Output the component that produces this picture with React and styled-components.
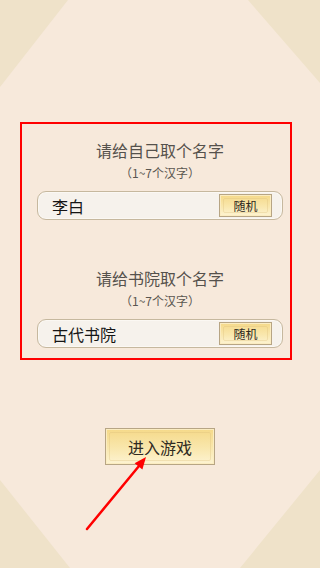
import React from "react";
import styled, { createGlobalStyle } from "styled-components";

const Global = createGlobalStyle`
  html, body { margin: 0; padding: 0; }
  body { font-family: "Noto Sans CJK SC", "Noto Sans", sans-serif; }
`;

const Page = styled.div`
  position: relative;
  width: 320px;
  height: 568px;
  overflow: hidden;
  background: #f7e9db;
  display: flex;
  flex-direction: column;
  align-items: center;
  padding-top: 140px;
  box-sizing: border-box;
`;

const Backdrop = styled.svg`
  position: absolute;
  inset: 0;
  z-index: 0;
`;

const Section = styled.div`
  position: relative;
  z-index: 1;
  width: 246px;
  display: flex;
  flex-direction: column;
  align-items: center;
  margin-bottom: ${(p) => p.$gap}px;
`;

const Title = styled.div`
  font-size: 16px;
  line-height: 20px;
  height: 20px;
  color: #55514c;
`;

const Hint = styled.div`
  font-size: 12px;
  line-height: 16px;
  height: 16px;
  margin-top: 5px;
  color: #5a5650;
`;

const Field = styled.div`
  margin-top: 10px;
  width: 246px;
  height: 29px;
  box-sizing: border-box;
  border: 1px solid #c6b89e;
  border-radius: 9px;
  background: #f6f2ec;
  display: flex;
  align-items: center;
  justify-content: space-between;
  padding: 0 10px 0 14px;
  box-shadow: inset 0 0 0 1px #fbf8f3;
`;

const Value = styled.span`
  font-size: 16px;
  color: #151515;
`;

const GoldButton = styled.div`
  position: relative;
  box-sizing: border-box;
  width: ${(p) => p.$w}px;
  height: ${(p) => p.$h}px;
  border: 1px solid #b7a584;
  background: linear-gradient(#f5d989 0%, #f9e7ad 55%, #fdf3d2 100%);
  box-shadow: inset 0 0 0 1px #fbecc0;
  display: flex;
  align-items: center;
  justify-content: center;
  font-size: ${(p) => p.$fs}px;
  color: #2f2a22;
  &::before {
    content: "";
    position: absolute;
    inset: 3px;
    border: 1px solid rgba(214, 186, 120, 0.3);
    border-radius: 2px;
  }
`;

const EnterWrap = styled.div`
  position: relative;
  z-index: 1;
  margin-top: 80px;
`;

const Overlay = styled.svg`
  position: absolute;
  inset: 0;
  z-index: 2;
  pointer-events: none;
`;

const Frame = styled.div`
  position: absolute;
  left: 20px;
  top: 122px;
  width: 272px;
  height: 238px;
  box-sizing: border-box;
  border: 2px solid #ff0000;
  z-index: 2;
  pointer-events: none;
`;

export default function App() {
  return (
    <>
      <Global />
      <Page>
        <Backdrop width="320" height="568" viewBox="0 0 320 568">
          <polygon points="0,0 68,0 0,87" fill="#efe2c9" />
          <polygon points="248,0 320,0 320,83" fill="#efe2c9" />
          <polygon points="0,480 0,568 70,568" fill="#efe2c9" />
          <polygon points="320,470 320,568 240,568" fill="#efe2c9" />
        </Backdrop>

        <Section $gap={48}>
          <Title>请给自己取个名字</Title>
          <Hint>（1~7个汉字）</Hint>
          <Field>
            <Value>李白</Value>
            <GoldButton $w={53} $h={23} $fs={12}>随机</GoldButton>
          </Field>
        </Section>

        <Section $gap={0}>
          <Title>请给书院取个名字</Title>
          <Hint>（1~7个汉字）</Hint>
          <Field>
            <Value>古代书院</Value>
            <GoldButton $w={53} $h={23} $fs={12}>随机</GoldButton>
          </Field>
        </Section>

        <EnterWrap>
          <GoldButton $w={110} $h={37} $fs={16}>进入游戏</GoldButton>
        </EnterWrap>

        <Frame />
        <Overlay width="320" height="568" viewBox="0 0 320 568">
          <line x1="87" y1="529" x2="139" y2="466" stroke="#ff0000" strokeWidth="2.5" strokeLinecap="round" />
          <polygon points="146,457 142.4,469.4 134.6,463.2" fill="#ff0000" />
        </Overlay>
      </Page>
    </>
  );
}
